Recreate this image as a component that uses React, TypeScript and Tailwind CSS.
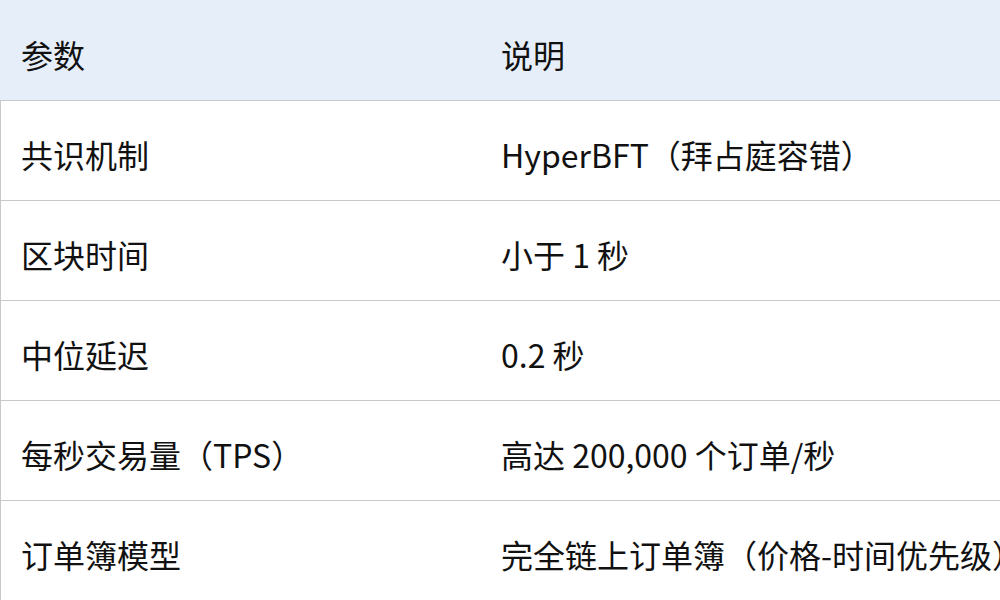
const rows: [string, string][] = [
  ['共识机制', 'HyperBFT（拜占庭容错）'],
  ['区块时间', '小于 1 秒'],
  ['中位延迟', '0.2 秒'],
  ['每秒交易量（TPS）', '高达 200,000 个订单/秒'],
  ['订单簿模型', '完全链上订单簿（价格-时间优先级）'],
];

export default function App() {
  return (
    <div
      className="w-[1000px] h-[600px] overflow-hidden bg-white text-[32px] leading-[40px] text-[#111] whitespace-nowrap"
      style={{ fontFamily: '"Noto Sans CJK SC", sans-serif' }}
    >
      <div className="flex h-[101px] bg-[#e6eef9] border-b border-[#c8c8c8]">
        <div className="w-[480px] shrink-0 pl-[21px] pt-[34px]">参数</div>
        <div className="pl-[21px] pt-[34px]">说明</div>
      </div>
      {rows.map(([k, v]) => (
        <div key={k} className="flex h-[100px] border-l border-b border-[#c8c8c8]">
          <div className="w-[479px] shrink-0 pl-[20px] pt-[33px]">{k}</div>
          <div className="pl-[21px] pt-[33px]">{v}</div>
        </div>
      ))}
    </div>
  );
}
